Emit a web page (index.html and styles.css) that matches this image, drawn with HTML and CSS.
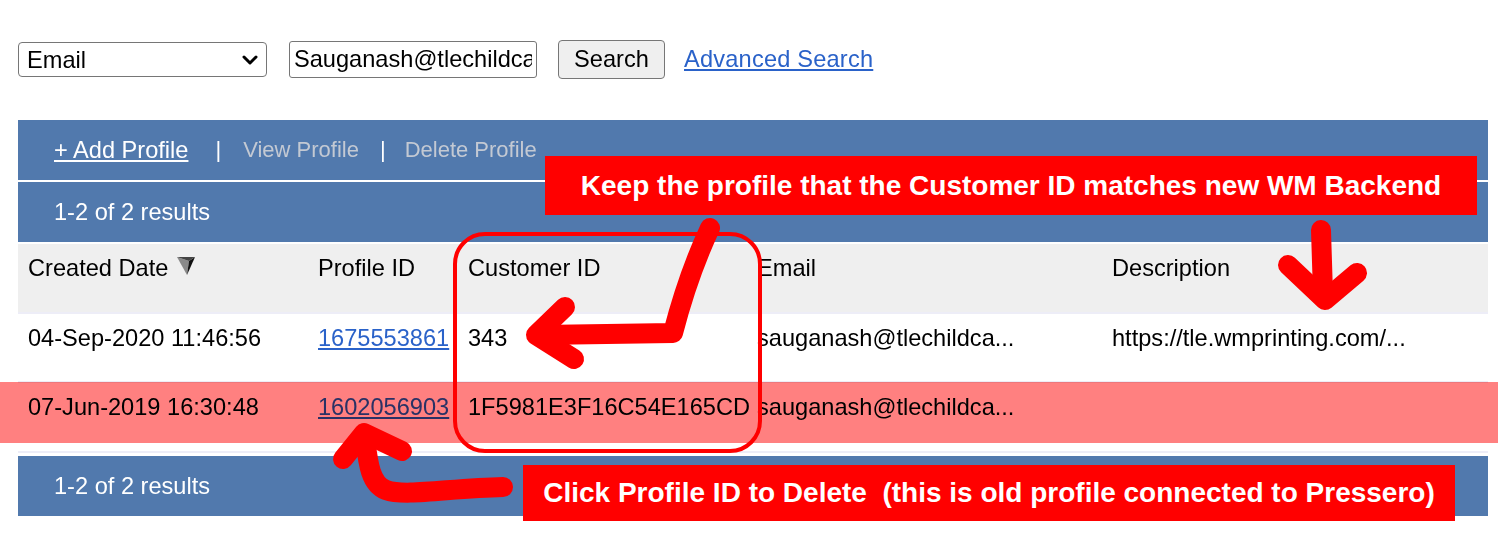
FILE: index.html
```html
<!DOCTYPE html>
<html>
<head>
<meta charset="utf-8">
<title>Profiles</title>
<link rel="stylesheet" href="styles.css">
</head>
<body>
<div class="page">
  <form class="search-row">
    <div class="select-wrap">
      <select class="field-select"><option>Email</option></select>
      <svg class="chev" viewBox="0 0 16 10"><polyline points="2,2 8,8 14,2" fill="none" stroke="#000" stroke-width="3" stroke-linecap="round" stroke-linejoin="round"/></svg>
    </div>
    <input class="field-input" type="text" value="Sauganash@tlechildcare.com">
    <button class="btn" type="button">Search</button>
    <a class="adv" href="#">Advanced Search</a>
  </form>

  <div class="panel">
    <div class="toolbar">
      <a class="tb-link" href="#">+ Add Profile</a>
      <span class="sep sep-first">|</span>
      <span class="tb-disabled">View Profile</span>
      <span class="sep sep-second">|</span>
      <span class="tb-disabled">Delete Profile</span>
    </div>
    <div class="results top">1-2 of 2 results</div>

    <div class="row head">
      <div class="cell">Created Date<svg class="sort" viewBox="0 0 19 19"><polygon points="0,0 12,4 10,18" fill="#8a8a8a"/><polygon points="12,4 18,0 10,18" fill="#111"/><polygon points="0,0 18,0 12,4" fill="#444"/></svg></div>
      <div class="cell">Profile ID</div>
      <div class="cell">Customer ID</div>
      <div class="cell">Email</div>
      <div class="cell">Description</div>
    </div>
    <div class="row r1">
      <div class="cell">04-Sep-2020 11:46:56</div>
      <div class="cell"><a class="id-link" href="#">1675553861</a></div>
      <div class="cell">343</div>
      <div class="cell">sauganash@tlechildca...</div>
      <div class="cell">https://tle.wmprinting.com/...</div>
    </div>
    <div class="row r2">
      <div class="cell">07-Jun-2019 16:30:48</div>
      <div class="cell"><a class="id-link" href="#">1602056903</a></div>
      <div class="cell">1F5981E3F16C54E165CD</div>
      <div class="cell">sauganash@tlechildca...</div>
      <div class="cell"></div>
    </div>
    <div class="results bottom">1-2 of 2 results</div>
  </div>

  <div class="hl"></div>
  <svg class="anno" viewBox="0 0 1498 536">
    <rect x="455" y="234" width="305" height="217" rx="30" ry="30" fill="none" stroke="#ff0000" stroke-width="4"/>
    <g fill="none" stroke="#ff0000" stroke-width="20" stroke-linecap="round" stroke-linejoin="round">
      <path d="M 710 228 Q 688 275 673 333 L 540 335"/>
      <path d="M 565 307 L 536 335 L 574 359"/>
      <path d="M 1321 230 L 1323 294"/>
      <path d="M 1288 265 L 1325 300 L 1357 273"/>
      <path d="M 503 487 C 450 488 405 497 386 490 C 370 484 368 462 365 438"/>
      <path d="M 343 459 L 364 433 L 402 451"/>
    </g>
  </svg>
  <div class="callout keep">Keep the profile that the Customer ID matches new WM Backend</div>
  <div class="callout click">Click Profile ID to Delete  (this is old profile connected to Pressero)</div>
</div>
</body>
</html>
```

FILE: styles.css
```css
body {
  margin: 0;
  background: #fff;
  color: #000;
  font-family: "Liberation Sans", Arial, Helvetica, sans-serif;
  font-size: 23.6px;
}

.page {
  position: relative;
  width: 1498px;
  height: 536px;
  box-sizing: border-box;
  padding: 40px 0 0 18px;
  overflow: hidden;
}

.search-row {
  display: flex;
  align-items: center;
  height: 39px;
  margin: 0;
}

.select-wrap {
  position: relative;
  width: 249px;
  height: 35px;
  margin-right: 22px;
}

.field-select {
  -webkit-appearance: none;
  appearance: none;
  width: 100%;
  height: 100%;
  margin: 0;
  box-sizing: border-box;
  border: 1px solid #767676;
  border-radius: 4px;
  background: #fff;
  color: #000;
  font-family: "Liberation Sans", Arial, sans-serif;
  font-size: 23.6px;
  padding: 0 0 0 8px;
}

.chev {
  position: absolute;
  right: 9px;
  top: 13px;
  width: 16px;
  height: 10px;
  pointer-events: none;
}

.field-input {
  width: 248px;
  height: 37px;
  box-sizing: border-box;
  margin: 0 21px 0 0;
  padding: 0 4px;
  border: 1px solid #767676;
  border-radius: 3px;
  color: #000;
  font-family: "Liberation Sans", Arial, sans-serif;
  font-size: 23.6px;
}

.btn {
  width: 107px;
  height: 39px;
  box-sizing: border-box;
  margin: 0 19px 0 0;
  padding: 0;
  border: 1px solid #767676;
  border-radius: 4px;
  background: #efefef;
  color: #000;
  font-family: "Liberation Sans", Arial, sans-serif;
  font-size: 23.6px;
}

.adv {
  color: #2a62c9;
  text-decoration: underline;
  letter-spacing: 0.2px;
}

.panel {
  margin-top: 41px;
  width: 1470px;
}

.toolbar {
  height: 60px;
  background: #5179ad;
  border-bottom: 2px solid #fff;
  display: flex;
  align-items: center;
  padding-left: 36px;
}

.tb-link {
  color: #fff;
  text-decoration: underline;
}

.sep {
  color: #fff;
  font-size: 22px;
}

.sep-first {
  margin: 0 22px 0 27px;
}

.sep-second {
  margin: 0 19px 0 21px;
}

.tb-disabled {
  color: #c3c9d3;
  font-size: 22px;
}

.results {
  height: 60px;
  background: #5179ad;
  color: #fff;
  display: flex;
  align-items: center;
  padding-left: 36px;
}

.results.top {
  margin-bottom: 2px;
}

.row {
  display: grid;
  grid-template-columns: 290px 150px 289px 355px 1fr;
  box-sizing: border-box;
  padding: 10px 0 0 10px;
  border-bottom: 2px solid #ededf7;
  line-height: 28px;
  white-space: nowrap;
}

.row.head {
  height: 70px;
  background: #efefef;
}

.row.r1 {
  height: 69px;
  background: #fff;
}

.row.r2 {
  height: 70px;
  background: #fff;
  margin-bottom: 3px;
}

.sort {
  display: inline-block;
  vertical-align: top;
  width: 19px;
  height: 19px;
  margin: 3px 0 0 9px;
}

.id-link {
  color: #2a62c9;
  text-decoration: underline;
}

.hl {
  position: absolute;
  left: 0;
  top: 382px;
  width: 1498px;
  height: 61px;
  background: #ff8080;
  mix-blend-mode: multiply;
}

.anno {
  position: absolute;
  left: 0;
  top: 0;
  width: 1498px;
  height: 536px;
  pointer-events: none;
}

.callout {
  position: absolute;
  background: #ff0000;
  color: #fff;
  font-weight: bold;
  font-size: 28px;
  display: flex;
  align-items: center;
  justify-content: center;
  white-space: pre;
}

.callout.keep {
  left: 545px;
  top: 156px;
  width: 932px;
  height: 59px;
}

.callout.click {
  left: 523px;
  top: 465px;
  width: 932px;
  height: 56px;
}
```
